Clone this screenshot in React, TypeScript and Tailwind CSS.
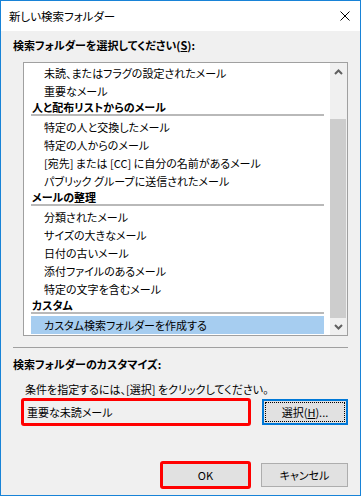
import React from 'react'

const font = { fontFamily: '"Noto Sans CJK JP", "Noto Sans", sans-serif', fontFeatureSettings: '"palt"' }

type Row = { kind: 'item' | 'header' | 'selected'; text: string }

const rows: Row[] = [
    { kind: 'item', text: '未読、またはフラグの設定されたメール' },
    { kind: 'item', text: '重要なメール' },
    { kind: 'header', text: '人と配布リストからのメール' },
    { kind: 'item', text: '特定の人と交換したメール' },
    { kind: 'item', text: '特定の人からのメール' },
    { kind: 'item', text: '[宛先] または [CC] に自分の名前があるメール' },
    { kind: 'item', text: 'パブリック グループに送信されたメール' },
    { kind: 'header', text: 'メールの整理' },
    { kind: 'item', text: '分類されたメール' },
    { kind: 'item', text: 'サイズの大きなメール' },
    { kind: 'item', text: '日付の古いメール' },
    { kind: 'item', text: '添付ファイルのあるメール' },
    { kind: 'item', text: '特定の文字を含むメール' },
    { kind: 'header', text: 'カスタム' },
    { kind: 'selected', text: 'カスタム検索フォルダーを作成する' },
]

function ListRow({ row }: { row: Row }) {
    if (row.kind === 'header') {
        return (
            <div className="h-[18px] flex flex-col">
                <span className="h-[14px] leading-[14px] pl-[1px] font-bold text-black">{row.text}</span>
                <div className="h-[2px] bg-[#b9b9b9]" />
            </div>
        )
    }
    return (
        <div className={`h-[18px] leading-[18px] pl-[13px] text-black ${row.kind === 'selected' ? 'bg-[#a6cdf0]' : ''}`}>
            {row.text}
        </div>
    )
}

export default function App() {
    return (
        <div className="w-[361px] h-[496px] border border-[#1883d7] bg-[#f0f0f0] flex flex-col text-[11px] text-black" style={font}>
            <div className="h-[30px] bg-white flex items-center justify-between pl-[8px] pr-[10px]">
                <span className="leading-[16px] text-[11.5px]">新しい検索フォルダー</span>
                <svg width="10" height="10" viewBox="0 0 10 10">
                    <path d="M0.5 0.5 L9.5 9.5 M9.5 0.5 L0.5 9.5" stroke="#000" strokeWidth="1" />
                </svg>
            </div>

            <div className="flex-1 flex flex-col px-[12px]">
                <div className="mt-[6px] leading-[16px] font-bold">
                    検索フォルダーを選択してください(<span className="underline">S</span>):
                </div>

                <div className="mt-[9px] ml-[10px] h-[274px] border border-[#a0a0a0] bg-white flex">
                    <div className="flex-1 pt-[1px] pl-[7px] pr-[6px]">
                        {rows.map((r, i) => (
                            <ListRow key={i} row={r} />
                        ))}
                    </div>
                    <div className="w-[17px] bg-[#f0f0f0] flex flex-col">
                        <div className="h-[17px] flex items-center justify-center">
                            <svg width="9" height="6" viewBox="0 0 9 6">
                                <path d="M1 5 L4.5 1.5 L8 5" stroke="#606060" strokeWidth="2" fill="none" />
                            </svg>
                        </div>
                        <div className="flex-1 pt-[39px] flex flex-col">
                            <div className="flex-1 bg-[#cdcdcd] mr-[1px]" />
                        </div>
                        <div className="h-[17px] flex items-center justify-center">
                            <svg width="9" height="6" viewBox="0 0 9 6">
                                <path d="M1 1 L4.5 4.5 L8 1" stroke="#606060" strokeWidth="2" fill="none" />
                            </svg>
                        </div>
                    </div>
                </div>

                <div className="mt-[11px] h-px bg-[#a0a0a0]" />

                <div className="mt-[8px] leading-[16px] font-bold">検索フォルダーのカスタマイズ:</div>
                <div className="mt-[9px] pl-[12px] leading-[16px]">条件を指定するには、[選択] をクリックしてください。</div>

                <div className="mt-[1px] flex items-center">
                    <div className="ml-[8px] w-[230px] h-[28px] border-[3px] border-[#ff0000] rounded-[3px] bg-[#f0f0f0] flex items-center pl-[3px] leading-[16px]">
                        重要な未読メール
                    </div>
                    <div className="ml-auto w-[86px] h-[26px] border-2 border-[#0078d7] bg-[#e1e1e1] p-[1px]">
                        <div className="h-full border border-dotted border-black flex items-center justify-center leading-[16px]">
                            選択(<span className="underline">H</span>)...
                        </div>
                    </div>
                </div>

                <div className="mt-[35px] flex items-center justify-end gap-[10px]">
                    <div className="w-[91px] h-[28px] border-[3px] border-[#ff0000] rounded-[3px] bg-[#e1e1e1] flex items-center justify-center leading-[16px] font-normal">
                        OK
                    </div>
                    <div className="w-[87px] h-[24px] border border-[#adadad] bg-[#e1e1e1] flex items-center justify-center leading-[16px]">
                        キャンセル
                    </div>
                </div>
            </div>
        </div>
    )
}
